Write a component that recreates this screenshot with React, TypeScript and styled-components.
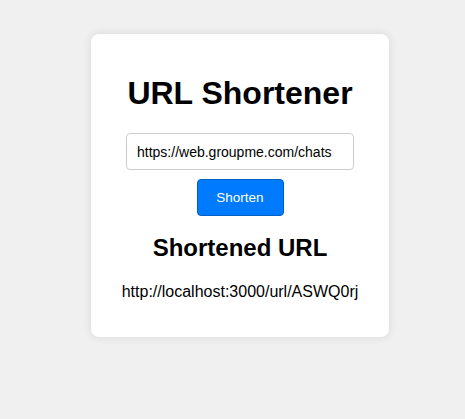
import React, { useState } from "react";
import styled, { createGlobalStyle } from "styled-components";

const GlobalStyle = createGlobalStyle`
  html, body {
    margin: 0;
    padding: 0;
    background: #f0f0f0;
    font-family: "Liberation Sans", Arial, sans-serif;
  }
`;

const Page = styled.div`
  display: flex;
  justify-content: center;
  align-items: flex-start;
  padding: 34px 0 0 15px;
  min-height: 385px;
  box-sizing: border-box;
`;

const Card = styled.div`
  width: 298px;
  box-sizing: border-box;
  background: #ffffff;
  border-radius: 8px;
  box-shadow: 0 0 10px rgba(0, 0, 0, 0.1);
  padding: 20px;
  text-align: center;
`;

const Title = styled.h1`
  font-size: 32px;
  font-weight: bold;
  color: #000;
  margin: 21px 0 21px;
  line-height: 37px;
`;

const Form = styled.form`
  display: flex;
  flex-direction: column;
  align-items: center;
  gap: 9px;
`;

const UrlInput = styled.input`
  width: 228px;
  height: 37px;
  box-sizing: border-box;
  padding: 8px 10px;
  border: 1px solid #cccccc;
  border-radius: 4px;
  font-family: "Liberation Sans", Arial, sans-serif;
  font-size: 14px;
  color: #000;
  outline: none;
`;

const Button = styled.button`
  width: 87px;
  height: 37px;
  box-sizing: border-box;
  background: #007bff;
  color: #ffffff;
  border: 1px solid #005ec4;
  border-radius: 4px;
  font-family: "Liberation Sans", Arial, sans-serif;
  font-size: 13.5px;
  cursor: pointer;
`;

const Subtitle = styled.h2`
  font-size: 24px;
  font-weight: bold;
  color: #000;
  margin: 18px 0 20px;
  line-height: 28px;
`;

const Result = styled.p`
  font-size: 16px;
  color: #000;
  margin: 0 0 16px;
  line-height: 19px;
`;

export default function App() {
  const [url, setUrl] = useState("https://web.groupme.com/chats");
  return (
    <>
      <GlobalStyle />
      <Page>
        <Card>
          <Title>URL Shortener</Title>
          <Form onSubmit={(e) => e.preventDefault()}>
            <UrlInput value={url} onChange={(e) => setUrl(e.target.value)} />
            <Button type="submit">Shorten</Button>
          </Form>
          <Subtitle>Shortened URL</Subtitle>
          <Result>http://localhost:3000/url/ASWQ0rj</Result>
        </Card>
      </Page>
    </>
  );
}
